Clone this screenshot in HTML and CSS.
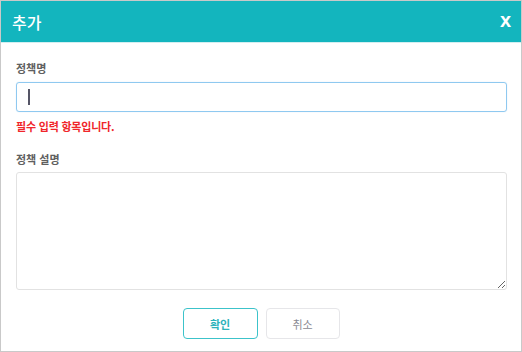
FILE: index.html
```html
<!DOCTYPE html>
<html lang="ko">
<head>
    <meta charset="UTF-8">
    <meta name="viewport" content="width=device-width, initial-scale=1.0">
    <title>추가</title>
    <link rel="stylesheet" href="styles.css">
</head>
<body>
    <div class="dialog">
        <div class="dialog-header">
            <span class="dialog-title">추가</span>
            <span class="dialog-close">x</span>
        </div>

        <div class="dialog-body">
            <label class="field-label">정책명</label>
            <div class="text-input focused"><span class="caret"></span></div>
            <div class="field-error">필수 입력 항목입니다.</div>

            <label class="field-label desc-label">정책 설명</label>
            <textarea class="text-area"></textarea>

            <div class="actions">
                <button class="btn btn-primary">확인</button>
                <button class="btn btn-cancel">취소</button>
            </div>
        </div>
    </div>
</body>
</html>
```

FILE: styles.css
```css
body {
    margin: 0;
    font-family: "Noto Sans CJK KR", "Noto Sans", sans-serif;
    background: #fff;
}
.dialog {
    width: 522px;
    height: 352px;
    box-sizing: border-box;
    border: 1px solid #c9c9c9;
    background: #fff;
}
.dialog-header {
    height: 41px;
    background-color: #13b5be;
    border-bottom: 1px solid #d3eef0;
    display: flex;
    align-items: center;
    justify-content: space-between;
    padding: 0 10px 0 11px;
    color: #fff;
}
.dialog-title {
    font-size: 16px;
    font-weight: 500;
}
.dialog-close {
    font-family: "Liberation Sans", Arial, sans-serif;
    font-size: 20px;
    font-weight: bold;
    line-height: 1;
    margin-top: -3px;
}
.dialog-body {
    padding: 17px 14px 0 15px;
    display: flex;
    flex-direction: column;
}
.field-label {
    font-size: 11px;
    line-height: 17px;
    font-weight: bold;
    color: #606060;
}
.desc-label {
    margin-top: 16px;
}
.text-input {
    margin-top: 5px;
    height: 30px;
    box-sizing: border-box;
    border: 1px solid #ddd;
    border-radius: 3px;
    padding: 0 11px;
    display: flex;
    align-items: center;
}
.text-input.focused {
    border-color: #8fc9f0;
    box-shadow: 0 0 1px rgba(100, 170, 230, 0.4);
}
.caret {
    width: 2px;
    height: 16px;
    background: #555566;
}
.field-error {
    margin-top: 6px;
    font-size: 11px;
    line-height: 17px;
    font-weight: bold;
    letter-spacing: -0.2px;
    color: #f0262b;
}
.text-area {
    margin-top: 4px;
    height: 118px;
    box-sizing: border-box;
    border: 1px solid #e2e2e2;
    border-radius: 3px;
    resize: vertical;
    font-family: inherit;
    outline: none;
}
.actions {
    margin-top: 18px;
    display: flex;
    justify-content: center;
    gap: 8px;
    padding-right: 1px;
}
.btn {
    width: 74px;
    height: 31px;
    box-sizing: border-box;
    border-radius: 4px;
    background: #fff;
    font-family: inherit;
    font-size: 11px;
    font-weight: bold;
    cursor: pointer;
}
.btn-primary {
    width: 75px;
    border: 1px solid #3cc3ca;
    color: #2cb3bb;
}
.btn-cancel {
    border: 1px solid #e6e6e9;
    color: #8a8a92;
    font-weight: normal;
}
```
